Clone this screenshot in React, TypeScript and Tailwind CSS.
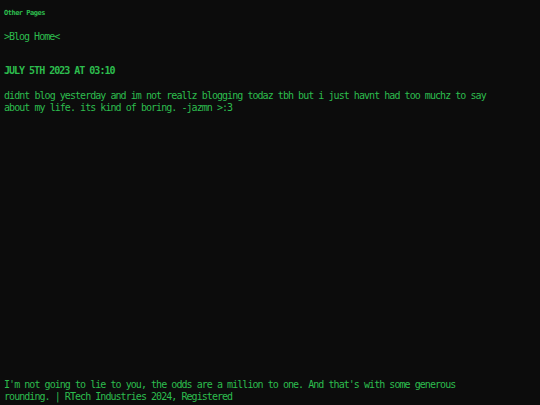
export default function App() {
  return (
    <div className="flex min-h-screen flex-col bg-[#0c0c0c] px-[4px] pt-[9px] pb-[2px] text-[#2dbd4e] [font-family:'DejaVu_Sans_Mono','Liberation_Mono',monospace]">
      <header className="text-[7px] leading-[8px] font-bold tracking-[-0.5px]">Other Pages</header>
      <nav className="mt-[14px] text-[10px] leading-[12px] tracking-[-1px]">
        &gt;Blog Home&lt;
      </nav>
      <main className="flex-1">
        <h2 className="mt-[22px] text-[10px] leading-[12px] font-bold tracking-[-1px] uppercase">
          July 5th 2023 at 03:10
        </h2>
        <p className="mt-[13px] max-w-[500px] text-[10px] leading-[12px] tracking-[-0.95px]">
          didnt blog yesterday and im not reallz blogging todaz tbh but i just havnt had too muchz
          to say about my life. its kind of boring. -jazmn &gt;:3
        </p>
      </main>
      <footer className="max-w-[500px] text-[10px] leading-[12px] tracking-[-0.95px]">
        I&apos;m not going to lie to you, the odds are a million to one. And that&apos;s with some
        generous rounding. | RTech Industries 2024, Registered
      </footer>
    </div>
  );
}
